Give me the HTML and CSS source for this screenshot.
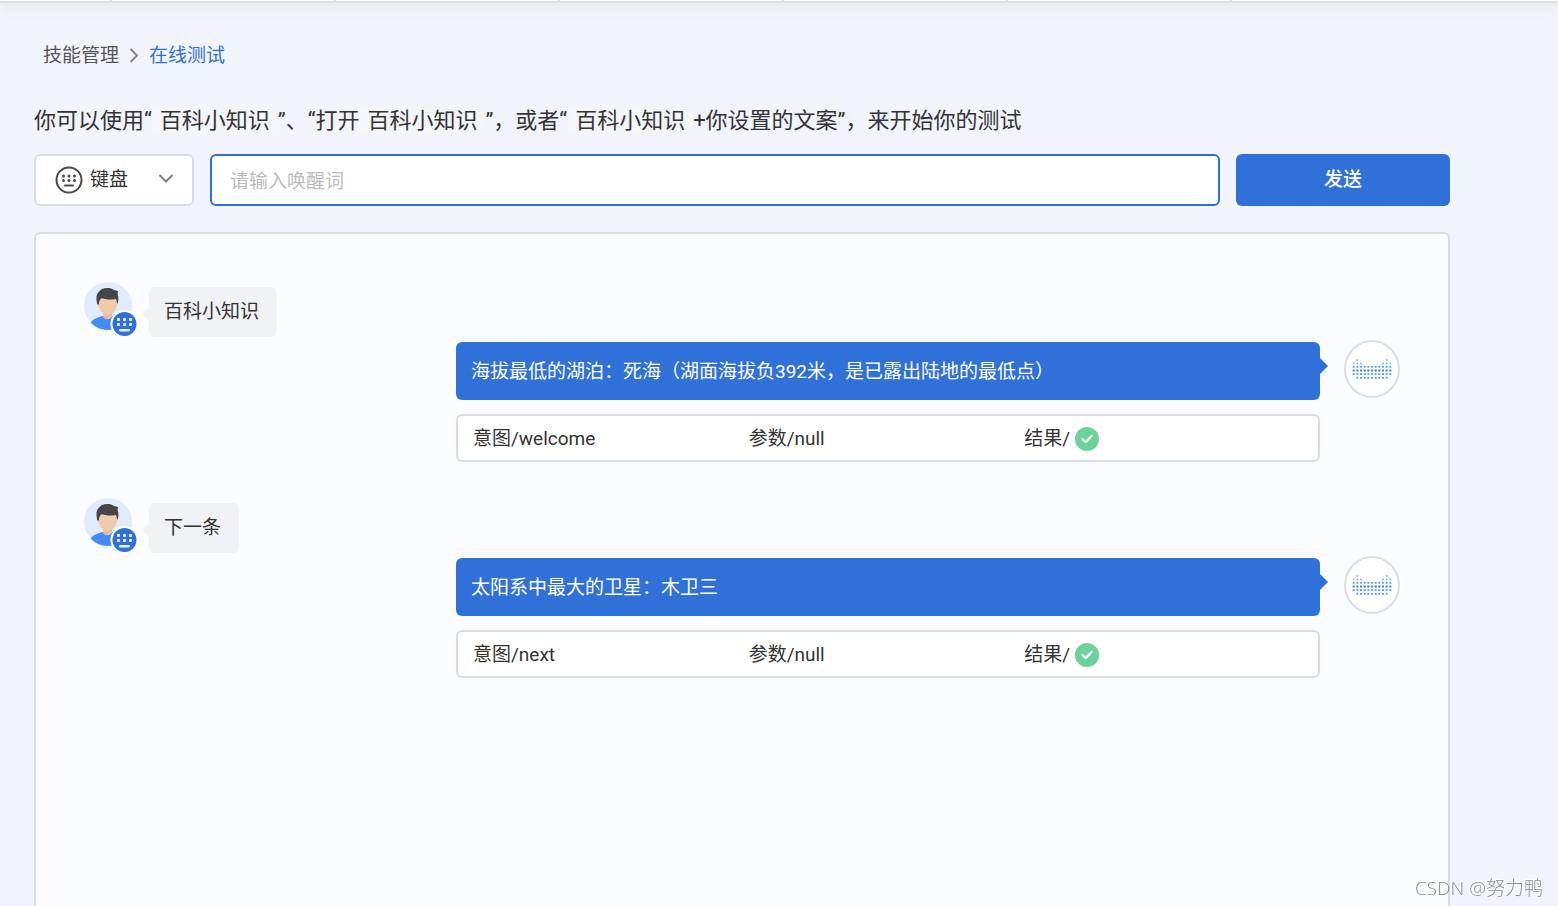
FILE: index.html
```html
<!DOCTYPE html>
<html lang="zh-CN">
<head>
<meta charset="utf-8">
<title>在线测试</title>
<link rel="stylesheet" href="styles.css">
</head>
<body>
<svg class="sprite" aria-hidden="true">
  <symbol id="user" viewBox="0 0 54 56">
    <clipPath id="face"><circle cx="24" cy="24" r="24"/></clipPath>
    <circle cx="24" cy="24" r="24" fill="#e0ecfd"/>
    <g clip-path="url(#face)">
      <path d="M6 42c2-5 8-7 13-8h9c5 1 11 3 14 8v8H6z" fill="#428bf8"/>
      <path d="M19 28h9v7c-2 3-7 3-9 0z" fill="#e6bf9f"/>
      <path d="M14 15h19v9c-1 4-5 9-9.500 9S15 28 14 24z" fill="#f0cbaa"/>
      <path d="M13.300 22.500C12 16 12 12.500 15 9.500c3-4 11-4.500 15-1.500l4 1-.500 3c1.500 3 1 7 0 10.500L32 17c-6 1-11 .5-14-1-2 1-3 3-3.200 6.500z" fill="#444547"/>
    </g>
    <circle cx="40.500" cy="42" r="14" fill="#fff"/>
    <circle cx="40.500" cy="42" r="12" fill="#3071d9"/>
    <g fill="#e7effb">
      <rect x="33" y="36" width="3" height="3" rx="1"/><rect x="39" y="36" width="3" height="3" rx="1"/><rect x="45" y="36" width="3" height="3" rx="1"/>
      <rect x="33" y="41" width="3" height="3" rx="1"/><rect x="39" y="41" width="3" height="3" rx="1"/><rect x="45" y="41" width="3" height="3" rx="1"/>
      <rect x="35" y="47" width="11" height="2.500" rx="1"/>
    </g>
  </symbol>
  <symbol id="bot" viewBox="0 0 52 54">
    <g fill="none" stroke="#5ea2f5" stroke-linecap="round" stroke-width="2.300">
      <path stroke="#86b9f7" stroke-width="2" d="M11.300 18h.01M40.700 18h.01M7.700 21.500h.01M11.300 21.500h.01M15 21.500h.01M37 21.500h.01M40.700 21.500h.01M44.300 21.500h.01"/>
      <path stroke-dasharray=".01 3.650" d="M7.700 24.800H44.400"/>
      <path stroke="#4b96f3" stroke-width="2.600" stroke-dasharray=".01 3.650" d="M7.700 28.500H44.400"/>
      <path stroke-dasharray=".01 3.650" d="M7.700 32.200H44.400"/>
      <path stroke-dasharray=".01 3.650" d="M11.360 35.800H40.800"/>
    </g>
  </symbol>
  <symbol id="ok" viewBox="0 0 24 24">
    <circle cx="12" cy="12" r="12" fill="#6dd19b"/>
    <path d="M7.500 12l3.200 3 6-6" fill="none" stroke="#fff" stroke-width="2.300" stroke-linecap="round" stroke-linejoin="round"/>
  </symbol>
</svg>

<div class="tabs"><span></span><span></span><span></span><span></span><span></span><span></span></div>

<main class="page">
  <nav class="crumbs">
    <a href="#skills">技能管理</a>
    <svg width="10" height="16" viewBox="0 0 10 16" aria-hidden="true"><path d="M1.500 1L8 7.500 1.500 14" fill="none" stroke="#7d8799" stroke-width="2"/></svg>
    <a class="current" href="#test">在线测试</a>
  </nav>

  <p class="intro">你可以使用“<span class="word">百科小知识</span>”、“打开<span class="word">百科小知识</span>”，或者“<span class="word">百科小知识</span>+你设置的文案”，来开始你的测试</p>

  <form class="bar">
    <div class="mode">
      <svg width="28" height="28" viewBox="0 0 28 28" aria-hidden="true">
        <circle cx="14" cy="14" r="12.500" fill="none" stroke="#4a4a4a" stroke-width="2"/>
        <g fill="#4a4a4a"><circle cx="8.500" cy="10" r="1.500"/><circle cx="14" cy="10" r="1.500"/><circle cx="19.500" cy="10" r="1.500"/><circle cx="8.500" cy="14.500" r="1.500"/><circle cx="14" cy="14.500" r="1.500"/><circle cx="19.500" cy="14.500" r="1.500"/><rect x="9" y="18.500" width="10" height="2" rx="1"/></g>
      </svg>
      <select aria-label="输入方式"><option>键盘</option></select>
      <svg class="chevron" width="16" height="12" viewBox="0 0 16 12" aria-hidden="true"><path d="M1.500 1L8 7.500 14.500 1" fill="none" stroke="#808080" stroke-width="2"/></svg>
    </div>
    <input class="wake" type="text" placeholder="请输入唤醒词" aria-label="唤醒词">
    <button class="send" type="button">发送</button>
  </form>

  <section class="chat">
    <article class="turn">
      <div class="ask">
        <svg class="user" aria-hidden="true"><use href="#user"/></svg>
        <p class="said">百科小知识</p>
      </div>
      <div class="reply">
        <div class="answer">
          <p class="bubble">海拔最低的湖泊：死海（湖面海拔负392米，是已露出陆地的最低点）</p>
          <div class="facts"><span>意图/welcome</span><span>参数/null</span><span>结果/<svg class="ok" role="img" aria-label="成功"><use href="#ok"/></svg></span></div>
        </div>
        <div class="bot"><svg width="52" height="54" aria-hidden="true"><use href="#bot"/></svg></div>
      </div>
    </article>
    <article class="turn">
      <div class="ask">
        <svg class="user" aria-hidden="true"><use href="#user"/></svg>
        <p class="said">下一条</p>
      </div>
      <div class="reply">
        <div class="answer">
          <p class="bubble">太阳系中最大的卫星：木卫三</p>
          <div class="facts"><span>意图/next</span><span>参数/null</span><span>结果/<svg class="ok" role="img" aria-label="成功"><use href="#ok"/></svg></span></div>
        </div>
        <div class="bot"><svg width="52" height="54" aria-hidden="true"><use href="#bot"/></svg></div>
      </div>
    </article>
  </section>
</main>
<div class="watermark">CSDN @努力鸭</div>
</body>
</html>
```
FILE: styles.css
```css
* { box-sizing: border-box; }

body {
  margin: 0;
  height: 100vh;
  display: flex;
  flex-direction: column;
  overflow: hidden;
  background: #f1f4fa;
  color: #333;
  font: 19px/28px Roboto, "Noto Sans CJK SC", sans-serif;
}

p { margin: 0; }
.sprite { position: absolute; width: 0; height: 0; }

.tabs {
  display: grid;
  grid-template-columns: 112px repeat(5, 224px);
  height: 3px;
  flex: none;
  background: #fff;
  border-bottom: 2px solid #dcdfe4;
  box-shadow: 0 2px 14px rgba(60, 70, 90, .22);
}
.tabs span { border-right: 2px solid #dfe1e5; }

.page {
  flex: 1;
  display: flex;
  flex-direction: column;
  padding: 39px 108px 0 34px;
}

.crumbs {
  display: flex;
  align-items: center;
  gap: 10px;
  padding-left: 9px;
}
.crumbs a { color: #555; text-decoration: none; }
.crumbs .current { color: #3071d9; }

.intro {
  margin-top: 35px;
  font-size: 22px;
  line-height: 32px;
}
.word {
  padding: 0 8px;
  background: #f3f5f9;
}

.bar {
  display: flex;
  gap: 16px;
  margin-top: 17px;
  height: 52px;
}
.mode {
  display: flex;
  align-items: center;
  width: 160px;
  padding: 0 18px 0 19px;
  background: #fff;
  border: 2px solid #d6dde7;
  border-radius: 6px;
}
.mode select {
  appearance: none;
  flex: 1;
  min-width: 0;
  padding: 0 0 0 7px;
  border: 0;
  background: none;
  color: #333;
  font: inherit;
}
.wake {
  flex: 1;
  min-width: 0;
  padding: 3px 18px 0;
  background: #fff;
  border: 2px solid #3071d9;
  border-radius: 6px;
  color: #333;
  font: inherit;
}
.wake::placeholder { color: #bbb; }
.send {
  width: 214px;
  border: 0;
  border-radius: 6px;
  background: #3071d9;
  color: #fff;
  font: inherit;
  font-weight: 500;
}

.chat {
  flex: 1;
  display: flex;
  flex-direction: column;
  gap: 36px;
  margin-top: 26px;
  padding: 48px;
  background: #fbfcff;
  border: 2px solid #d6dde7;
  border-bottom: 0;
  border-radius: 6px 6px 0 0;
}

.ask {
  display: flex;
  gap: 11px;
  height: 58px;
}
.user { width: 54px; height: 56px; }
.said {
  position: relative;
  align-self: flex-start;
  margin-top: 5px;
  padding: 11px 18px 11px 15px;
  background: #f1f2f5;
  border-radius: 6px;
}
.said::before {
  content: "";
  position: absolute;
  left: -7px;
  top: 20px;
  border: 7px solid transparent;
  border-left: 0;
  border-right-color: #f1f2f5;
}

.reply {
  display: flex;
  align-items: flex-start;
  gap: 24px;
  padding-left: 372px;
}
.answer {
  flex: 1;
  display: flex;
  flex-direction: column;
  gap: 14px;
  padding-top: 2px;
}
.bubble {
  position: relative;
  padding: 16px 15px 14px;
  background: #3071d9;
  border-radius: 6px;
  color: #fff;
}
.bubble::after {
  content: "";
  position: absolute;
  right: -8px;
  top: 16px;
  border: 8px solid transparent;
  border-right: 0;
  border-left-color: #3071d9;
}
.facts {
  display: grid;
  grid-template-columns: repeat(3, 1fr);
  padding: 9px 18px 7px 15px;
  background: #fff;
  border: 2px solid #d6dde7;
  border-radius: 6px;
}
.facts span {
  display: flex;
  align-items: center;
  gap: 5px;
}
.ok { width: 24px; height: 24px; }
.bot {
  width: 56px;
  height: 58px;
  background: #fff;
  border: 2px solid #d9dee6;
  border-radius: 50%;
}
.bot svg { display: block; }

.watermark {
  position: fixed;
  right: 15px;
  bottom: 4px;
  color: #8c8f94;
  font-family: "Open Sans", "Noto Sans CJK SC", sans-serif;
  text-shadow: -1px -1px 0 #fff;
  font-weight: 300;
}
```
